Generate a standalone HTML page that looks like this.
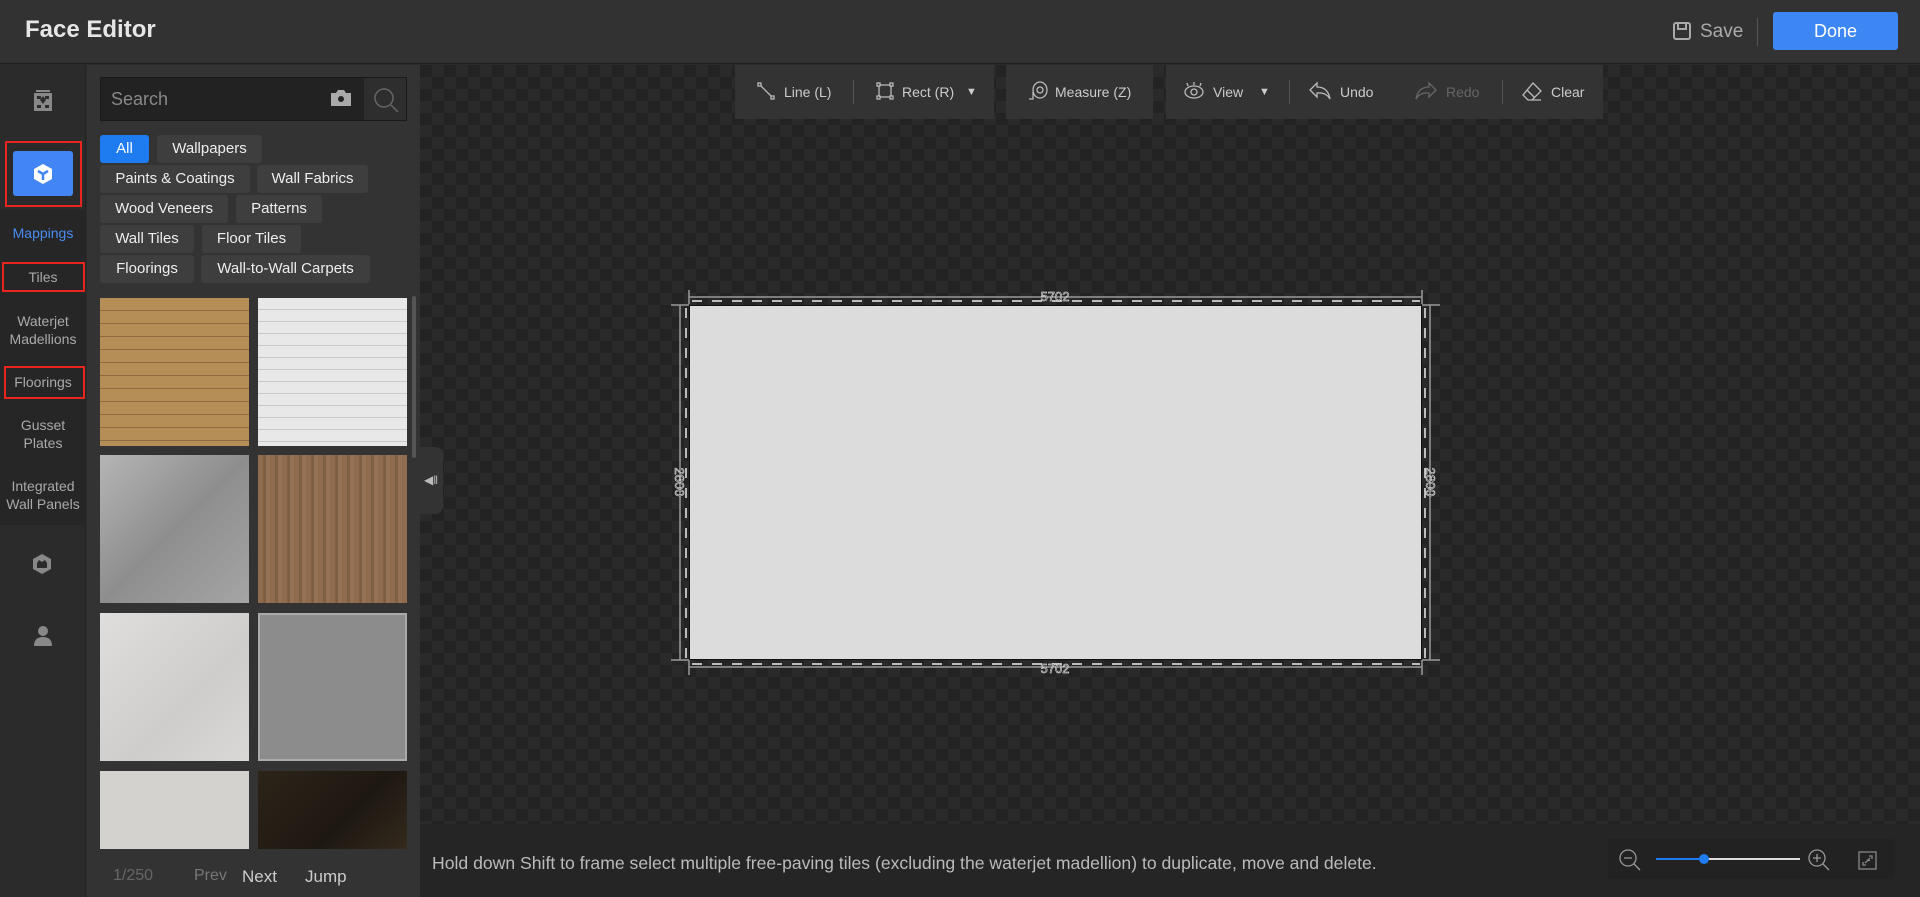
<!DOCTYPE html>
<html><head><meta charset="utf-8"><style>
*{box-sizing:border-box;margin:0;padding:0}
body{width:1920px;height:897px;overflow:hidden;background:#2b2b2b;font-family:"Liberation Sans",sans-serif;position:relative;color:#ddd}
.a{position:absolute}
.hdr{left:0;top:0;width:1920px;height:64px;background:#323232;border-bottom:1px solid #1e1e1e}
.side{left:0;top:65px;width:86px;height:832px;background:#2b2b2b;border-right:1px solid #222}
.panel{left:87px;top:65px;width:333px;height:832px;background:#333}
.chip{position:absolute;height:28px;line-height:28px;background:#3e3e3e;border-radius:3px;font-size:15px;color:#eee;text-align:center}
.th{position:absolute;width:149px;height:148px}
.canvas{left:420px;top:65px;width:1500px;height:759px;background-color:#232323;background-image:linear-gradient(45deg,#2a2a2a 25%,transparent 25%,transparent 75%,#2a2a2a 75%),linear-gradient(45deg,#2a2a2a 25%,transparent 25%,transparent 75%,#2a2a2a 75%);background-size:24px 24px;background-position:0 0,12px 12px}
.tb{position:absolute;top:65px;height:54px;background:#333}
.tt{position:absolute;top:84px;font-size:14px;color:#ccc;line-height:16px}
.sep{position:absolute;top:80px;width:1px;height:24px;background:#555}
.si{font-size:14px;color:#aaa;text-align:center;position:absolute;left:0;width:86px;line-height:18px}
</style></head><body>
<div class="a hdr"></div>
<div class="a" style="left:25px;top:16px;font-size:24px;font-weight:bold;color:#e6e6e6">Face Editor</div>
<svg class="a" style="left:1672px;top:21px" width="20" height="20" viewBox="0 0 20 20"><rect x="2" y="2" width="16" height="16" rx="2" fill="none" stroke="#aaa" stroke-width="2"/><rect x="6" y="2" width="8" height="6" fill="none" stroke="#aaa" stroke-width="2"/></svg>
<div class="a" style="left:1700px;top:21px;font-size:19px;color:#aaa">Save</div>
<div class="a" style="left:1757px;top:18px;width:1px;height:28px;background:#555"></div>
<div class="a" style="left:1773px;top:12px;width:125px;height:38px;background:#3d87f5;border-radius:3px;color:#fff;font-size:18px;text-align:center;line-height:38px">Done</div>

<div class="a side"></div>
<div class="a" style="left:0;top:210px;width:86px;height:315px;background:#262626"></div>
<svg class="a" style="left:33px;top:90px" width="20" height="22" viewBox="0 0 20 22"><rect x="1" y="3" width="18" height="18" fill="#888"/><rect x="3" y="0" width="14" height="2" fill="#888"/><path d="M10 6 L13 10 L10 14 L7 10Z M4 6h4v3H4z M12 6h4v3h-4z M4 15h4v3H4z M12 15h4v3h-4z" fill="#2b2b2b"/></svg>
<div class="a" style="left:5px;top:141px;width:77px;height:66px;border:2px solid #e8261e"></div>
<div class="a" style="left:13px;top:151px;width:60px;height:45px;background:#4285f4;border-radius:3px"></div>
<svg class="a" style="left:32px;top:163px" width="22" height="22" viewBox="0 0 22 22"><path d="M11 1 L20 6 L20 16 L11 21 L2 16 L2 6Z" fill="#fff"/><path d="M11 11 L11 17 M11 11 L6 8 M11 11 L16 8" stroke="#4285f4" stroke-width="2.5"/></svg>
<div class="si" style="top:224px;color:#4a8cf0">Mappings</div>
<div class="a" style="left:2px;top:262px;width:83px;height:30px;border:2px solid #e8261e"></div>
<div class="si" style="top:268px">Tiles</div>
<div class="si" style="top:312px">Waterjet<br>Madellions</div>
<div class="a" style="left:4px;top:366px;width:81px;height:33px;border:2px solid #e8261e"></div>
<div class="si" style="top:373px">Floorings</div>
<div class="si" style="top:416px">Gusset<br>Plates</div>
<div class="si" style="top:477px">Integrated<br>Wall Panels</div>
<svg class="a" style="left:31px;top:553px" width="22" height="22" viewBox="0 0 22 22"><path d="M11 1 L20 6 L20 16 L11 21 L2 16 L2 6Z" fill="#888"/><rect x="6" y="10" width="10" height="5" fill="#2b2b2b"/><path d="M6 10 L8 7 L11 9 L14 7 L16 10" fill="#2b2b2b"/></svg>
<svg class="a" style="left:33px;top:625px" width="20" height="22" viewBox="0 0 20 22"><circle cx="10" cy="6" r="5" fill="#888"/><path d="M1 21 Q1 12 10 12 Q19 12 19 21Z" fill="#888"/></svg>

<div class="a panel"></div>
<div class="a" style="left:100px;top:77px;width:307px;height:44px;background:#222;border:1px solid #1a1a1a"></div>
<div class="a" style="left:364px;top:78px;width:42px;height:42px;background:#2e2e2e"></div>
<div class="a" style="left:111px;top:89px;font-size:18px;color:#888">Search</div>
<svg class="a" style="left:330px;top:89px" width="22" height="18" viewBox="0 0 22 18"><path d="M1 4h5l2-3h6l2 3h5v13H1z" fill="#aaa"/><circle cx="11" cy="10" r="3" fill="#222"/></svg>
<svg class="a" style="left:372px;top:86px" width="28" height="28" viewBox="0 0 28 28"><circle cx="12" cy="12" r="9" fill="none" stroke="#666" stroke-width="1.5"/><path d="M19 19 L26 26" stroke="#666" stroke-width="1.5"/></svg>

<div class="chip" style="left:100px;top:135px;width:49px;background:#1e7cf0;color:#fff">All</div>
<div class="chip" style="left:157px;top:135px;width:105px">Wallpapers</div>
<div class="chip" style="left:100px;top:165px;width:150px">Paints &amp; Coatings</div>
<div class="chip" style="left:257px;top:165px;width:111px">Wall Fabrics</div>
<div class="chip" style="left:100px;top:195px;width:128px">Wood Veneers</div>
<div class="chip" style="left:236px;top:195px;width:86px">Patterns</div>
<div class="chip" style="left:100px;top:225px;width:94px">Wall Tiles</div>
<div class="chip" style="left:202px;top:225px;width:99px">Floor Tiles</div>
<div class="chip" style="left:100px;top:255px;width:94px">Floorings</div>
<div class="chip" style="left:201px;top:255px;width:169px">Wall-to-Wall Carpets</div>

<div class="th" style="left:100px;top:298px;background:repeating-linear-gradient(180deg,#b58d57 0 12px,#8f6c40 12px 13px),#b08850"></div>
<div class="th" style="left:258px;top:298px;background:repeating-linear-gradient(180deg,#e8e8e8 0 11px,#c9c9c9 11px 12px)"></div>
<div class="th" style="left:100px;top:455px;background:linear-gradient(135deg,#b5b5b5,#8e8e8e 50%,#a5a5a5)"></div>
<div class="th" style="left:258px;top:455px;background:repeating-linear-gradient(90deg,#8f6c4e 0 5px,#7f5f44 5px 8px,#957255 8px 12px)"></div>
<div class="th" style="left:100px;top:613px;background:linear-gradient(135deg,#e0dedc,#cfcdcb 60%,#dad8d6)"></div>
<div class="th" style="left:258px;top:613px;background:#8c8c8c;border:2px solid #aaa"></div>
<div class="th" style="left:100px;top:771px;height:78px;background:#d4d2ce"></div>
<div class="th" style="left:258px;top:771px;height:78px;background:linear-gradient(135deg,#2c2418,#1e1812 60%,#342a1d)"></div>
<div class="a" style="left:412px;top:296px;width:4px;height:162px;background:#555;border-radius:2px"></div>
<div class="a" style="left:113px;top:867px;font-size:16px;color:#666">1/250</div>
<div class="a" style="left:194px;top:867px;font-size:16px;color:#777">Prev</div>
<div class="a" style="left:242px;top:867px;font-size:17px;color:#ccc">Next</div>
<div class="a" style="left:305px;top:867px;font-size:17px;color:#ccc">Jump</div>

<div class="a canvas"></div>
<div class="a" style="left:420px;top:447px;width:23px;height:67px;background:#333;border-radius:0 8px 8px 0"></div>
<div class="a" style="left:424px;top:473px;font-size:12px;color:#bbb">◀‖</div>

<div class="tb" style="left:735px;width:259px"></div>
<div class="tb" style="left:1006px;width:147px"></div>
<div class="tb" style="left:1166px;width:437px"></div>
<svg class="a" style="left:757px;top:82px" width="18" height="18" viewBox="0 0 18 18" fill="none" stroke="#bbb" stroke-width="1.3"><rect x="1" y="1" width="3" height="3"/><rect x="14" y="14" width="3" height="3"/><path d="M3.5 3.5 L14.5 14.5"/></svg>
<div class="tt" style="left:784px">Line (L)</div>
<div class="sep" style="left:853px"></div>
<svg class="a" style="left:876px;top:82px" width="18" height="18" viewBox="0 0 18 18" fill="none" stroke="#bbb" stroke-width="1.3"><rect x="3" y="3" width="12" height="12"/><rect x="1" y="1" width="3" height="3" fill="#333"/><rect x="14" y="1" width="3" height="3" fill="#333"/><rect x="1" y="14" width="3" height="3" fill="#333"/><rect x="14" y="14" width="3" height="3" fill="#333"/></svg>
<div class="tt" style="left:902px">Rect (R)</div>
<div class="tt" style="left:966px;font-size:11px">▼</div>
<svg class="a" style="left:1027px;top:81px" width="22" height="20" viewBox="0 0 22 20" fill="none" stroke="#bbb" stroke-width="1.3"><ellipse cx="13" cy="9" rx="7" ry="8"/><circle cx="13" cy="9" r="3"/><path d="M6 11 L6 18 L2 18"/></svg>
<div class="tt" style="left:1055px">Measure (Z)</div>
<svg class="a" style="left:1183px;top:82px" width="22" height="18" viewBox="0 0 22 18" fill="none" stroke="#bbb" stroke-width="1.3"><ellipse cx="11" cy="10" rx="9" ry="6"/><circle cx="11" cy="10" r="3"/><path d="M5 4 L4 1 M11 3 V0 M17 4 L18 1"/></svg>
<div class="tt" style="left:1213px">View</div>
<div class="tt" style="left:1259px;font-size:11px">▼</div>
<div class="sep" style="left:1289px"></div>
<svg class="a" style="left:1308px;top:81px" width="24" height="20" viewBox="0 0 24 20" fill="none" stroke="#bbb" stroke-width="1.3"><path d="M9 2 L2 9 L9 16 V12 Q18 11 22 18 Q20 6 9 6Z"/></svg>
<div class="tt" style="left:1340px">Undo</div>
<svg class="a" style="left:1414px;top:81px" width="24" height="20" viewBox="0 0 24 20" fill="none" stroke="#666" stroke-width="1.3"><path d="M15 2 L22 9 L15 16 V12 Q6 11 2 18 Q4 6 15 6Z"/></svg>
<div class="tt" style="left:1446px;color:#666">Redo</div>
<div class="sep" style="left:1502px"></div>
<svg class="a" style="left:1521px;top:81px" width="22" height="22" viewBox="0 0 22 22" fill="none" stroke="#bbb" stroke-width="1.3"><path d="M12 2 L20 10 L11 19 L7 19 L2 14 Z M6 9 L14 17 M7 19 H20"/></svg>
<div class="tt" style="left:1551px">Clear</div>

<div class="a" style="left:689px;top:305px;width:733px;height:355px;background:#dcdcdc;border:1px solid #111"></div>
<svg class="a" style="left:660px;top:285px" width="800" height="400" viewBox="660 285 800 400">
<g stroke="#999" stroke-width="1.5" fill="none">
<path d="M689 297 H1422 M689 290 V304 M1422 290 V304"/>
<path d="M689 667 H1422 M689 660 V675 M1422 660 V675"/>
<path d="M680 305 V660 M671 305 H689 M671 660 H689"/>
<path d="M1430 305 V660 M1422 305 H1440 M1422 660 H1440"/>
</g>
<g stroke="#bbb" stroke-width="2" stroke-dasharray="10 10" fill="none">
<path d="M692 301 H1420 M692 664 H1420 M686 308 V658 M1425 308 V658"/>
</g>
<g font-family="Liberation Sans" font-size="13" fill="#222" stroke="#fff" stroke-width="0.5" text-anchor="middle">
<text x="1055" y="301">5702</text>
<text x="1055" y="673">5702</text>
<text transform="translate(675,482) rotate(90)">2800</text>
<text transform="translate(1426,482) rotate(90)">2800</text>
</g>
</svg>

<div class="a" style="left:420px;top:824px;width:1500px;height:73px;background:#252525"></div>
<div class="a" style="left:432px;top:853px;font-size:17.6px;color:#bbb">Hold down Shift to frame select multiple free-paving tiles (excluding the waterjet madellion) to duplicate, move and delete.</div>
<div class="a" style="left:1608px;top:839px;width:287px;height:40px;background:#222"></div>
<svg class="a" style="left:1618px;top:848px" width="24" height="24" viewBox="0 0 24 24" fill="none" stroke="#999" stroke-width="1.3"><circle cx="10" cy="10" r="8"/><path d="M16 16 L22 22 M6 10 H14"/></svg>
<div class="a" style="left:1656px;top:858px;width:48px;height:2px;background:#1e7cf0"></div>
<div class="a" style="left:1704px;top:858px;width:96px;height:2px;background:#ddd"></div>
<div class="a" style="left:1699px;top:854px;width:10px;height:10px;border-radius:50%;background:#1e7cf0"></div>
<svg class="a" style="left:1807px;top:848px" width="24" height="24" viewBox="0 0 24 24" fill="none" stroke="#999" stroke-width="1.3"><circle cx="10" cy="10" r="8"/><path d="M16 16 L22 22 M6 10 H14 M10 6 V14"/></svg>
<svg class="a" style="left:1858px;top:851px" width="19" height="19" viewBox="0 0 19 19" fill="none" stroke="#888" stroke-width="1.3"><rect x="1" y="1" width="17" height="17"/><path d="M11 5 H14 V8 M8 14 H5 V11 M7 12 L12 7 M9 9.5 h3"/></svg>
</body></html>
